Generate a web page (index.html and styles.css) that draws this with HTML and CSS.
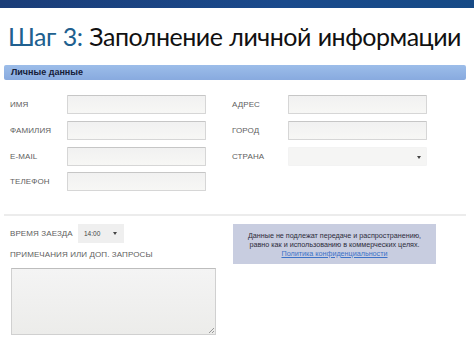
FILE: index.html
```html
<!DOCTYPE html>
<html lang="ru">
<head>
<meta charset="utf-8">
<link rel="stylesheet" href="styles.css">
</head>
<body>
<div class="topbar"></div>
<h1 class="title"><span class="step">Шаг 3:</span> Заполнение личной информации</h1>
<div class="form">
  <div class="section-head">Личные данные</div>
  <div class="cols">
    <div class="col col-left">
      <div class="row"><span class="label">Имя</span><span class="input"></span></div>
      <div class="row"><span class="label">Фамилия</span><span class="input"></span></div>
      <div class="row"><span class="label">E-mail</span><span class="input"></span></div>
      <div class="row"><span class="label">Телефон</span><span class="input"></span></div>
    </div>
    <div class="col col-right">
      <div class="row"><span class="label">Адрес</span><span class="input"></span></div>
      <div class="row"><span class="label">Город</span><span class="input"></span></div>
      <div class="row"><span class="label">Страна</span><span class="input select"><span class="arrow"></span></span></div>
    </div>
  </div>
  <div class="separator"></div>
  <div class="bottom">
    <div class="notes">
      <div class="time-row"><span class="label">Время заезда</span><span class="time-select">14:00<span class="arrow"></span></span></div>
      <div class="label notes-label">Примечания или доп. запросы</div>
      <div class="textarea"><span class="grip"></span></div>
    </div>
    <div class="info">
      Данные не подлежат передаче и распространению,<br>равно как и использованию в коммерческих целях.<br><span class="link">Политика конфиденциальности</span>
    </div>
  </div>
</div>
</body>
</html>
```
FILE: styles.css
```css
html, body { margin: 0; padding: 0; background: #fff; }
body { width: 474px; height: 355px; overflow: hidden; font-family: "Liberation Sans", Arial, sans-serif; }

.topbar {
  height: 8px;
  background: linear-gradient(to right, #1b3d78, #1a4a8c 60%, #164a86);
}

.title {
  margin: 0;
  padding: 13px 0 0 8px;
  height: 46px;
  box-sizing: border-box;
  font-family: Lato, sans-serif;
  font-weight: 400;
  font-size: 25px;
  line-height: 30px;
  color: #111;
  letter-spacing: -0.5px;
  word-spacing: 1px;
  white-space: nowrap;
}
.title .step { color: #20608f; }

.form { padding: 11px 0 0 4px; width: 462px; }

.section-head {
  height: 15px;
  background: linear-gradient(to bottom, #9cbde9, #88aadf);
  border-radius: 2px;
  box-sizing: border-box;
  padding-left: 7px;
  font-size: 9px;
  font-weight: bold;
  line-height: 15px;
  color: #16203a;
}

.cols { display: flex; padding-top: 15px; }
.col { display: flex; flex-direction: column; gap: 6px; }
.col-left { padding-left: 6px; width: 222px; }
.row { display: flex; align-items: center; height: 19.7px; }
.label {
  font-size: 8px;
  text-transform: uppercase;
  color: #606060;
  letter-spacing: 0.1px;
}
.col-left .label { width: 57px; }
.col-right .label { width: 56px; }
.input {
  box-sizing: border-box;
  width: 139px;
  height: 19px;
  border: 1px solid #d6d6d6;
  border-top-color: #c6c6c6;
  background: linear-gradient(to bottom, #f1f1f1, #f7f7f5);
  border-radius: 1px;
  position: relative;
}
.select { border-color: #f3f3f3; background: #f5f5f4; }
.select .arrow {
  position: absolute;
  right: 5px;
  top: 8px;
  border-left: 2.5px solid transparent;
  border-right: 2.5px solid transparent;
  border-top: 3px solid #444;
}

.separator {
  margin-top: 22px;
  height: 2px;
  background: #ececec;
}

.bottom { display: flex; padding-top: 8px; }
.notes { width: 228px; padding-left: 6px; box-sizing: border-box; }
.time-row { display: flex; align-items: center; height: 19px; }
.time-row .label { width: 68px; }
.time-select {
  position: relative;
  box-sizing: border-box;
  width: 46px;
  height: 19px;
  background: #efefef;
  font-size: 6.5px;
  color: #444;
  line-height: 19px;
  padding-left: 6px;
}
.time-select .arrow {
  position: absolute;
  right: 7px;
  top: 8px;
  border-left: 2.5px solid transparent;
  border-right: 2.5px solid transparent;
  border-top: 3px solid #444;
}
.notes-label { margin-top: 6px; height: 12px; line-height: 12px; }
.textarea {
  position: relative;
  margin-top: 7px;
  margin-left: 1px;
  width: 205px;
  height: 67px;
  box-sizing: border-box;
  border: 1px solid #d0d0d0;
  border-top-color: #bdbdbd;
  background: linear-gradient(to bottom, #f4f4f4, #ececea);
}
.grip {
  position: absolute;
  right: 1px;
  bottom: 1px;
  width: 5px;
  height: 5px;
  background: linear-gradient(135deg, transparent 45%, #999 45%, #999 55%, transparent 55%, transparent 75%, #999 75%, #999 85%, transparent 85%);
}

.info {
  margin-left: 1px;
  margin-top: 0;
  width: 203px;
  height: 40px;
  box-sizing: border-box;
  background: #c8cde0;
  padding-top: 7px;
  text-align: center;
  font-size: 7.2px;
  line-height: 9px;
  color: #2c2c3a;
  white-space: nowrap;
}
.info .link { color: #3c72c8; text-decoration: underline; }
```
